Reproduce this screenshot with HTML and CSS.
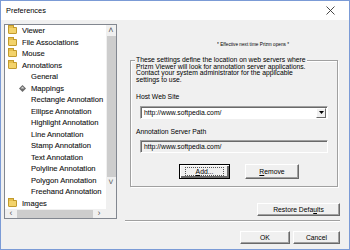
FILE: index.html
```html
<!DOCTYPE html>
<html lang="en">
<head>
  <meta charset="UTF-8">
  <title>Preferences</title>
  <link rel="stylesheet" href="styles.css">
</head>
<body>

<div class="window">
  <!-- Titelleiste -->
  <div class="titlebar">
    <span class="title">Preferences</span>
    <svg class="close" width="9" height="9" viewBox="0 0 9 9"><path d="M0.5 0.5 L8.5 8.5 M8.5 0.5 L0.5 8.5" stroke="#333" stroke-width="0.9"/></svg>
  </div>

  <div class="dialog">
    <!-- Baumansicht links -->
    <div class="tree">
      <div class="tree-main">
        <ul class="tree-list">
          <li class="node"><span class="folder"></span>Viewer</li>
          <li class="node"><span class="folder"></span>File Associations</li>
          <li class="node"><span class="folder"></span>Mouse</li>
          <li class="node"><span class="folder"></span>Annotations</li>
          <li class="leaf">General</li>
          <li class="leaf current">
            <svg class="map-icon" width="7" height="7" viewBox="0 0 7 7"><path d="M3.5 0 L7 3.5 L3.5 7 L0 3.5 Z" fill="#6b6b6b"/><path d="M3.5 1.5 L5.3 3.5 L1.7 3.5 Z" fill="#d8d8d8"/></svg>
            Mappings
          </li>
          <li class="leaf">Rectangle Annotation</li>
          <li class="leaf">Ellipse Annotation</li>
          <li class="leaf">Highlight Annotation</li>
          <li class="leaf">Line Annotation</li>
          <li class="leaf">Stamp Annotation</li>
          <li class="leaf">Text Annotation</li>
          <li class="leaf">Polyline Annotation</li>
          <li class="leaf">Polygon Annotation</li>
          <li class="leaf">Freehand Annotation</li>
          <li class="node"><span class="folder"></span>Images</li>
        </ul>
        <div class="vscroll">
          <span class="arrow">&#x2C4;</span>
          <div class="vthumb"></div>
          <span class="arrow">&#x2C5;</span>
        </div>
      </div>
      <div class="hscroll">
        <span class="arrow">&lsaquo;</span>
        <div class="hthumb"></div>
        <span class="arrow">&rsaquo;</span>
        <div class="corner"></div>
      </div>
    </div>

    <!-- Einstellungen rechts -->
    <div class="panel">
      <div class="notice"><span>* Effective next time Prizm opens *</span></div>

      <div class="group">
        <div class="group-legend">These settings define the location on web servers where<br>Prizm Viewer will look for annotation server applications.<br>Contact your system administrator for the applicable<br>settings to use.</div>

        <div class="label host-label">Host Web Site</div>
        <div class="combo">
          <span class="combo-text">http://www.softpedia.com/</span>
          <span class="combo-btn">
            <svg width="5" height="3" viewBox="0 0 5 3"><path d="M0 0 L5 0 L2.5 3 Z" fill="#000"/></svg>
          </span>
        </div>

        <div class="label path-label">Annotation Server Path</div>
        <div class="field">http://www.softpedia.com/</div>

        <div class="group-buttons">
          <button class="btn btn-default"><span class="focus"><u>A</u>dd...</span></button>
          <button class="btn btn-remove"><u>R</u>emove</button>
        </div>
      </div>

      <button class="btn btn-restore">Restore Defa<u>u</u>lts</button>
      <div class="separator"></div>
      <div class="footer">
        <button class="btn btn-ok">OK</button>
        <button class="btn btn-cancel">Cancel</button>
      </div>
    </div>
  </div>
</div>

</body>
</html>
```

FILE: styles.css
```css
* {
  margin: 0;
  padding: 0;
  box-sizing: border-box;
}

body {
  font-family: 'Liberation Sans', Arial, sans-serif;
  background: #f0f0f0;
  color: #000;
}

.window {
  width: 350px;
  height: 250px;
  border: 1px solid #7b9bd6;
  display: flex;
  flex-direction: column;
  background: #f0f0f0;
}

.titlebar {
  height: 19px;
  background: #fff;
  display: flex;
  align-items: center;
  justify-content: space-between;
  padding: 0 14px 0 5px;
}

.title {
  font-size: 7.4px;
  color: #000;
}

.dialog {
  flex: 1;
  display: flex;
  padding: 4px 0 0 3px;
}

/* Baum */
.tree {
  width: 113px;
  height: 195px;
  border: 1px solid #828790;
  background: #fff;
  display: flex;
  flex-direction: column;
}

.tree-main {
  flex: 1;
  display: flex;
  overflow: hidden;
}

.tree-list {
  list-style: none;
  flex: 1;
  font-size: 7.6px;
  color: #111;
  -webkit-text-stroke: 0.1px #111;
  overflow: hidden;
}

.tree-list li {
  height: 11.5px;
  display: flex;
  align-items: center;
  white-space: nowrap;
}

.node {
  padding-left: 3px;
}

.leaf {
  padding-left: 26px;
}

.leaf.current {
  padding-left: 14px;
}

.map-icon {
  margin-right: 5px;
}

.folder {
  position: relative;
  width: 9px;
  height: 7px;
  margin-right: 5px;
  background: #f3d36b;
  border: 1px solid #c29b2d;
  border-radius: 0 0 1px 1px;
}

.folder::before {
  content: "";
  position: absolute;
  left: -1px;
  top: -3px;
  width: 4px;
  height: 2px;
  background: #e6bf4e;
  border: 1px solid #c29b2d;
  border-bottom: none;
}

.vscroll {
  width: 10px;
  background: #f0f0f0;
  display: flex;
  flex-direction: column;
  align-items: center;
}

.vscroll .arrow {
  height: 11px;
  font-size: 9px;
  line-height: 11px;
  color: #606060;
}

.vthumb {
  width: 9px;
  height: 141px;
  background: #cdcdcd;
}

.hscroll {
  height: 9px;
  display: flex;
  align-items: center;
  background: #f0f0f0;
}

.hscroll .arrow {
  width: 12px;
  text-align: center;
  font-size: 9px;
  line-height: 9px;
  color: #606060;
}

.hthumb {
  width: 76px;
  height: 8px;
  background: #cdcdcd;
}

.corner {
  width: 10px;
  height: 9px;
  margin-left: auto;
  background: #f0f0f0;
}

/* rechte Seite */
.panel {
  width: 220px;
  margin-left: 8px;
  display: flex;
  flex-direction: column;
  font-size: 6.8px;
}

.notice {
  margin-top: 17px;
  padding-left: 92px;
  font-size: 5.6px;
  line-height: 7px;
}

.notice span {
  display: inline-block;
  white-space: nowrap;
  transform: scaleX(0.84);
  transform-origin: left center;
}

.group {
  margin: 12px 0 0 5px;
  width: 208px;
  height: 127px;
  border: 1px solid #a0a0a0;
  box-shadow: inset 1px 1px #fff, 1px 1px #fff;
  padding: 0 9px 0 9px;
}

.group-legend {
  width: fit-content;
  margin: -4px 0 0 -5px;
  padding: 0 1px;
  background: #f0f0f0;
  line-height: 6.5px;
  white-space: nowrap;
}

.label {
  line-height: 8px;
  margin-left: -4px;
}

.host-label {
  margin-top: 10px;
}

.combo {
  margin-top: 5px;
  height: 13px;
  display: flex;
  align-items: center;
  background: #fff;
  border: 1px solid;
  border-color: #a0a0a0 #fff #fff #a0a0a0;
  box-shadow: inset 1px 1px #696969;
  padding: 0 1px 0 3px;
}

.combo-text {
  flex: 1;
}

.combo-btn {
  width: 10px;
  height: 10px;
  display: flex;
  align-items: center;
  justify-content: center;
  background: #f0f0f0;
  border: 1px solid;
  border-color: #fff #696969 #696969 #fff;
}

.path-label {
  margin-top: 9px;
}

.field {
  margin-top: 4px;
  height: 13px;
  line-height: 11px;
  padding-left: 3px;
  border: 1px solid;
  border-color: #a0a0a0 #fff #fff #a0a0a0;
  box-shadow: inset 1px 1px #696969;
}

.group-buttons {
  display: flex;
  gap: 15px;
  margin: 11px 0 0 39px;
}

.btn {
  font-family: 'Liberation Sans', Arial, sans-serif;
  font-size: 6.8px;
  height: 13px;
  background: #f0f0f0;
  color: #000;
  border: 1px solid;
  border-color: #fff #696969 #696969 #fff;
  box-shadow: inset -1px -1px #a0a0a0;
  display: flex;
  align-items: center;
  justify-content: center;
}

.btn-default {
  width: 51px;
  height: 15px;
  border: 1px solid #000;
  box-shadow: inset 1px 1px #fff, inset -2px -2px #696969;
}

.focus {
  border: 1px dotted #555;
  padding: 0 10px;
  line-height: 7px;
}

.btn-remove {
  width: 54px;
  height: 15px;
}

.btn-restore {
  align-self: flex-end;
  width: 83px;
  margin: 16px 5px 0 0;
}

.separator {
  margin: 4px 5px 0 0;
  height: 2px;
  border-top: 1px solid #a0a0a0;
  border-bottom: 1px solid #fff;
}

.footer {
  display: flex;
  justify-content: flex-end;
  gap: 3px;
  margin: 9px 5px 0 0;
}

.btn-ok {
  width: 50px;
}

.btn-cancel {
  width: 47px;
}
```
